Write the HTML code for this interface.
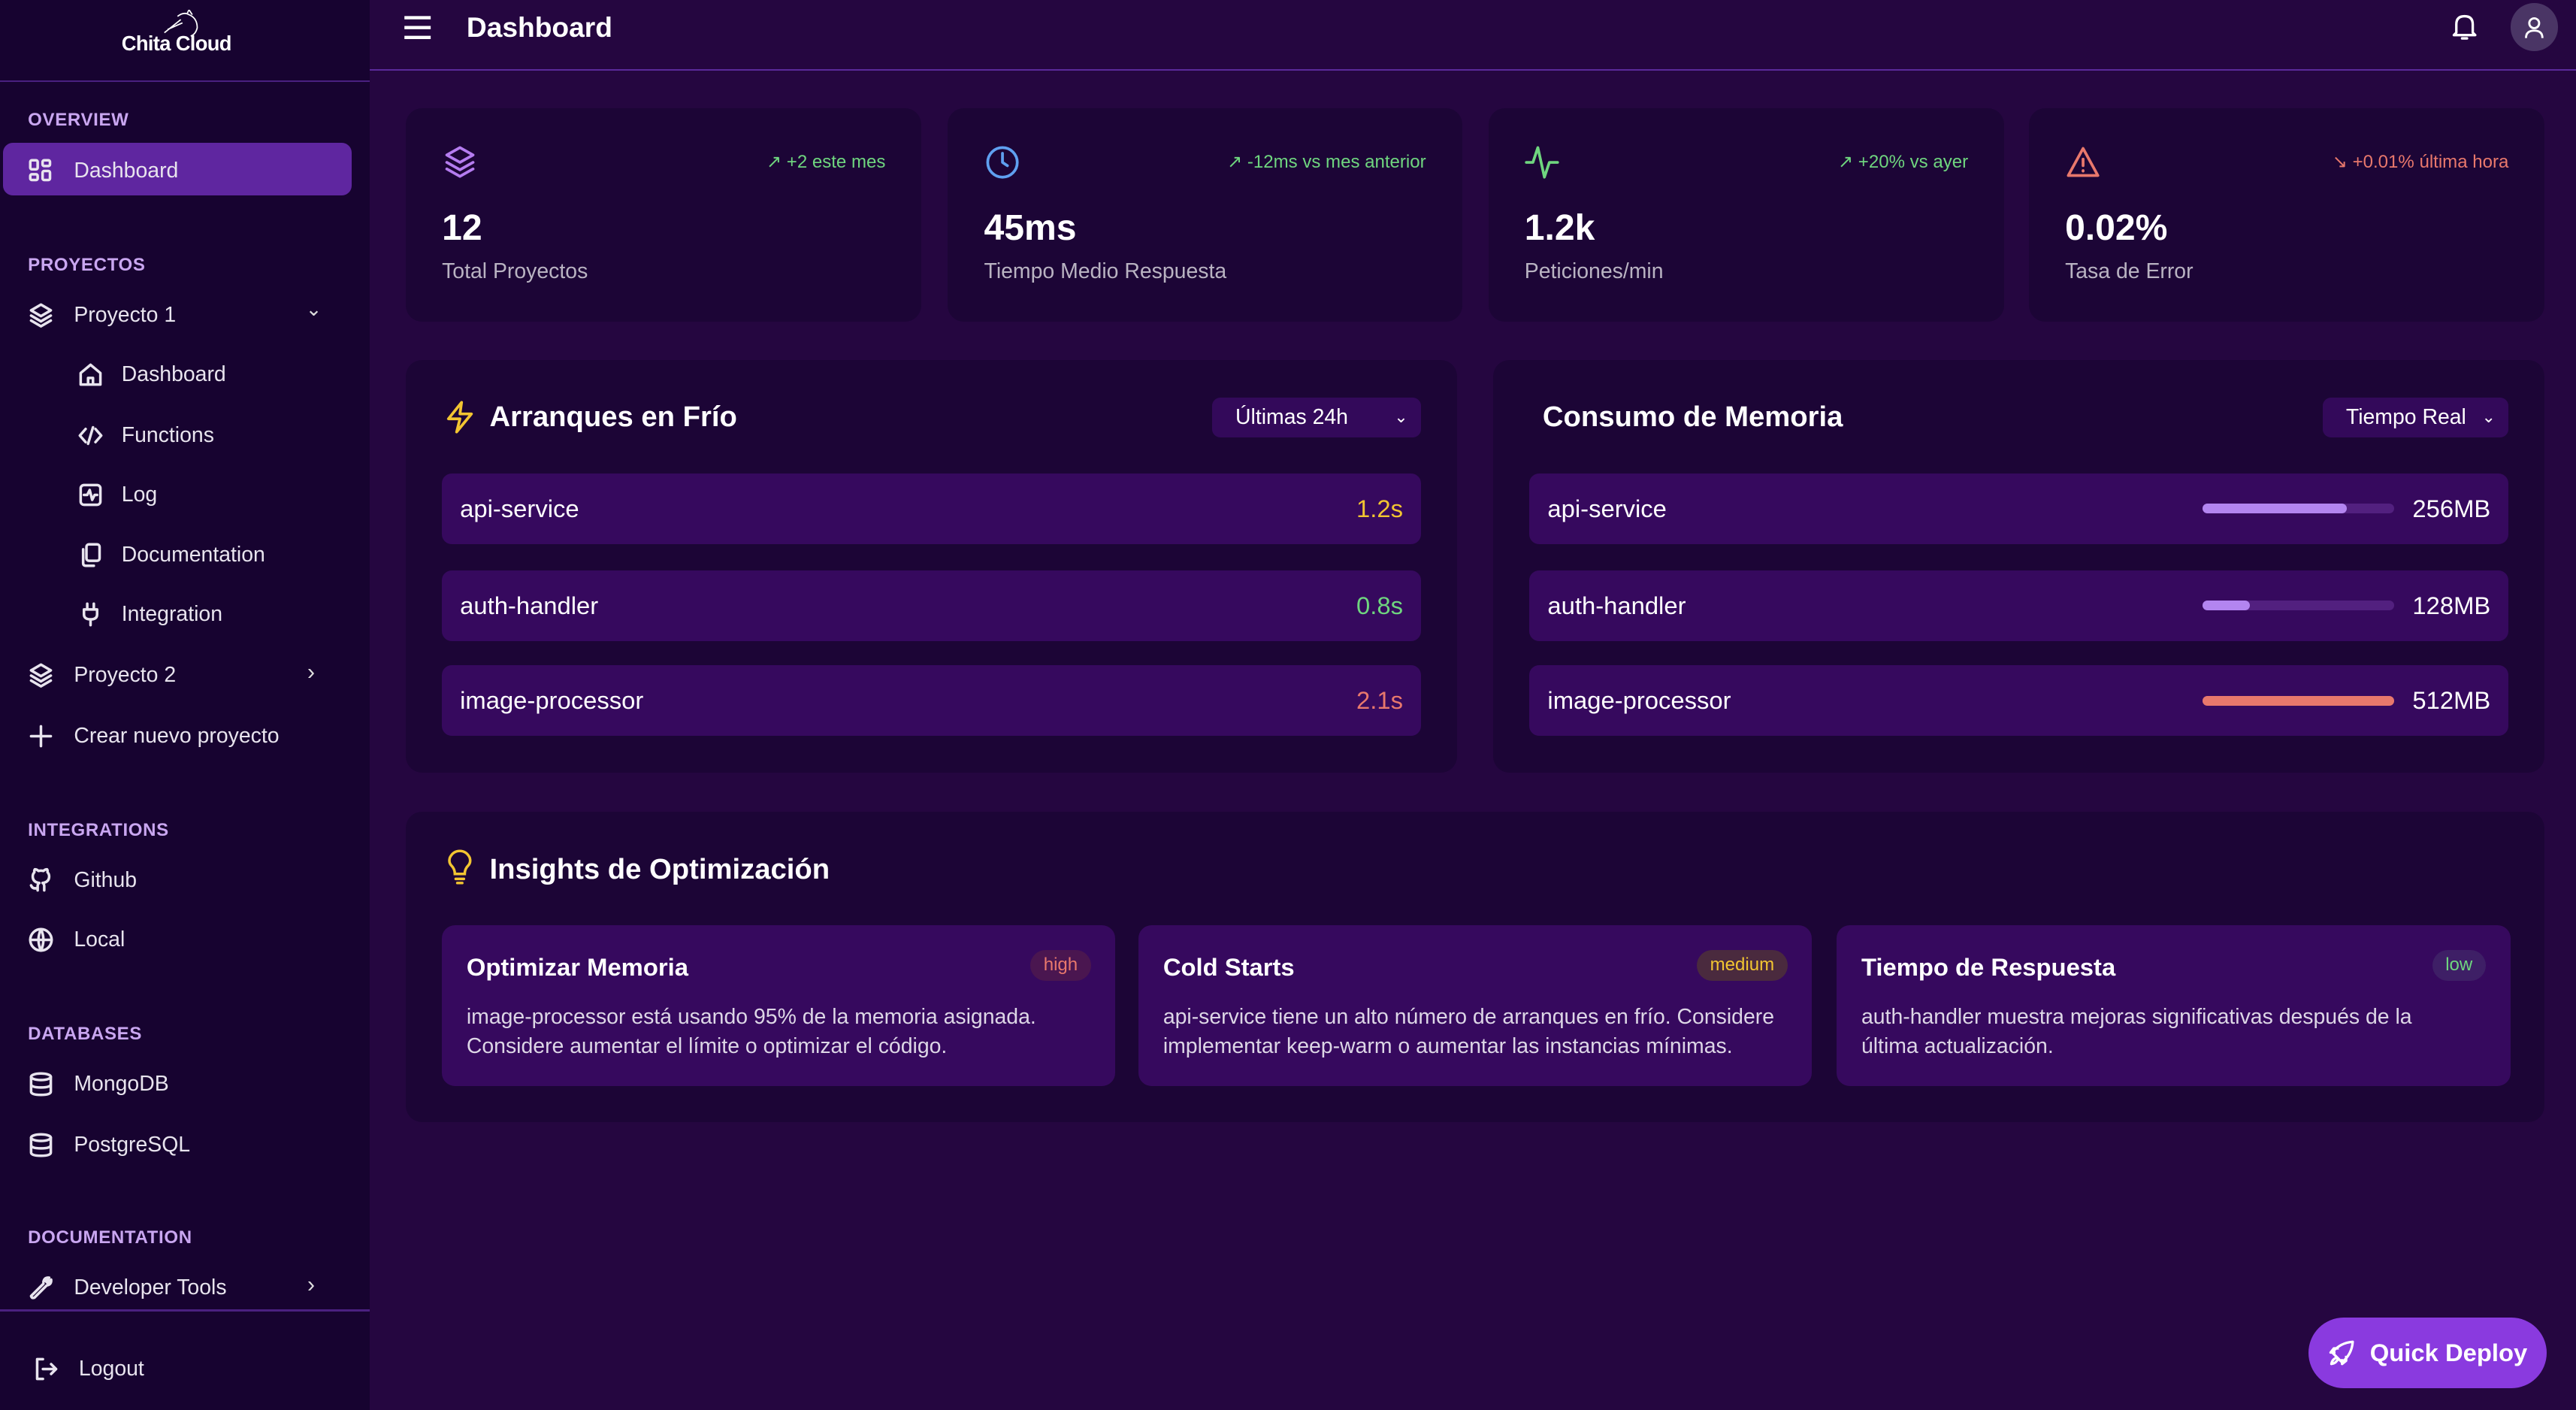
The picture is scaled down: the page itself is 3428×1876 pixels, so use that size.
<!DOCTYPE html>
<html><head><meta charset="utf-8"><style>
html,body{margin:0;padding:0;background:#250640;overflow:hidden}
#root{width:1568px;height:858px;position:relative;zoom:2.18622;font-family:"Liberation Sans",sans-serif;color:#fff;background:#250640}
.abs{position:absolute}
.sb{left:0;top:0;width:225px;height:858px;background:#170330}
.sec{position:absolute;left:17px;font-size:11px;font-weight:bold;color:#c9a6f0;letter-spacing:.3px;margin-top:1px}
.it{position:absolute;left:17px;font-size:13px;color:#e8e4ee;display:flex;align-items:center;gap:12px;margin-top:1px}
.it svg,.sub svg{width:16px;height:16px;fill:none;stroke:#e8e4ee;stroke-width:1.6;stroke-linecap:round;stroke-linejoin:round}
.sub{position:absolute;left:47px;font-size:13px;color:#e8e4ee;display:flex;align-items:center;gap:11px;margin-top:1px}
.card{position:absolute;background:#1c0536;border-radius:10px}
.stat .val{position:absolute;left:22px;top:60px;font-size:22px;font-weight:bold}
.stat .lbl{position:absolute;left:22px;top:92px;font-size:13px;color:#b9b3c2}
.stat .tr{position:absolute;right:22px;top:26px;font-size:11px}
.stat svg{position:absolute;left:22px;top:22px;width:22px;height:22px;fill:none;stroke-width:1.7;stroke-linecap:round;stroke-linejoin:round}
.row{position:absolute;left:22px;right:22px;height:43px;background:#36095e;border-radius:6px;font-size:15px;display:flex;align-items:center;padding:0 11px;justify-content:space-between}
.ttl{position:absolute;font-size:17.5px;font-weight:bold}
.dd{position:absolute;background:#33095a;border-radius:5px;font-size:13px;height:24px;display:flex;align-items:center;padding:0 8px 0 14px;box-sizing:border-box;justify-content:space-between}
.bar{width:117px;height:6px;border-radius:3px;background:#52207f;position:relative;margin-left:auto;margin-right:11px}
.bar i{position:absolute;left:0;top:0;height:6px;border-radius:3px}
.ins{position:absolute;top:69px;width:410px;height:98px;background:#36095e;border-radius:8px}
.ins b{position:absolute;left:15px;top:17px;font-size:15px}
.ins p{position:absolute;left:15px;top:47px;margin:0;font-size:13px;line-height:18px;color:#ddd6e6;width:375px}
.tag{position:absolute;right:15px;top:15px;font-size:11px;padding:3px 8px;border-radius:10px}
</style></head><body><div id="root">
<div class="abs sb"></div>
<div class="abs" style="left:0;top:49px;width:225px;height:1px;background:#4a2080"></div>
<svg class="abs" style="left:96px;top:6px" width="30" height="18" viewBox="0 0 30 18" fill="none" stroke="#fff" stroke-width="0.8"><path d="M4 14 L14 6 M6 12 L15 8 M12 4 Q16 1 19 3 Q24 5 24 11 Q23 15 20 16 M18 2 L19 0 L21 3"/></svg>
<div class="abs" style="left:74px;top:19px;font-size:12.5px;font-weight:bold;letter-spacing:-.3px">Chita Cloud</div>
<div class="sec" style="top:66px">OVERVIEW</div>
<div class="abs" style="left:2px;top:87px;width:212px;height:32px;background:#5f26a0;border-radius:6px"></div>
<div class="it" style="top:95px"><svg viewBox="0 0 16 16"><rect x="1.5" y="1.5" width="4.5" height="5.5" rx="1"/><rect x="9" y="1.5" width="4.5" height="3.5" rx="1"/><rect x="1.5" y="10" width="4.5" height="3.5" rx="1"/><rect x="9" y="8" width="4.5" height="5.5" rx="1"/></svg><span>Dashboard</span></div>
<div class="sec" style="top:154px">PROYECTOS</div>
<div class="it" style="top:183px"><svg viewBox="0 0 16 16"><path d="M8 1.5 L14 5 L8 8.5 L2 5Z M2 8.2 L8 11.7 L14 8.2 M2 11.2 L8 14.7 L14 11.2"/></svg><span>Proyecto 1</span></div>
<div class="abs" style="left:186px;top:181px;font-size:12px;color:#ddd">&#8964;</div>
<div class="sub" style="top:219px"><svg viewBox="0 0 16 16"><path d="M2 7 L8 2 L14 7 V14 H2Z M6.5 14 V10 H9.5 V14"/></svg><span>Dashboard</span></div>
<div class="sub" style="top:256px"><svg viewBox="0 0 16 16"><path d="M5 4 L1.5 8 L5 12 M11 4 L14.5 8 L11 12 M9.5 3 L6.5 13"/></svg><span>Functions</span></div>
<div class="sub" style="top:292px"><svg viewBox="0 0 16 16"><rect x="2" y="2" width="12" height="12" rx="2"/><path d="M4 8 H6 L7.5 5 L9 11 L10.5 8 H12"/></svg><span>Log</span></div>
<div class="sub" style="top:329px"><svg viewBox="0 0 16 16"><rect x="5.5" y="1.5" width="8" height="10" rx="1.5"/><path d="M3.5 4.5 V13 Q3.5 14.5 5 14.5 H10"/></svg><span>Documentation</span></div>
<div class="sub" style="top:365px"><svg viewBox="0 0 16 16"><path d="M6 1.5 V5 M10 1.5 V5 M4 5 H12 V8 Q12 11 8 11 Q4 11 4 8Z M8 11 V14.5"/></svg><span>Integration</span></div>
<div class="it" style="top:402px"><svg viewBox="0 0 16 16"><path d="M8 1.5 L14 5 L8 8.5 L2 5Z M2 8.2 L8 11.7 L14 8.2 M2 11.2 L8 14.7 L14 11.2"/></svg><span>Proyecto 2</span></div>
<div class="abs" style="left:187px;top:401px;font-size:14px;color:#ddd">&#8250;</div>
<div class="it" style="top:439px"><svg viewBox="0 0 16 16"><path d="M8 2 V14 M2 8 H14"/></svg><span>Crear nuevo proyecto</span></div>
<div class="sec" style="top:498px">INTEGRATIONS</div>
<div class="it" style="top:527px"><svg viewBox="0 0 16 16"><path d="M6 14 V11.5 Q6 10 7 9.5 Q3 9 3 5.5 Q3 4 4 3 Q3.8 1.8 4.3 1.2 Q5.5 1.2 6.5 2.2 Q8 1.8 9.5 2.2 Q10.5 1.2 11.7 1.2 Q12.2 1.8 12 3 Q13 4 13 5.5 Q13 9 9 9.5 Q10 10 10 11.5 V14 M6 12.5 Q3 13.5 2 11"/></svg><span>Github</span></div>
<div class="it" style="top:563px"><svg viewBox="0 0 16 16"><circle cx="8" cy="8" r="6.5"/><path d="M1.5 8 H14.5 M8 1.5 Q5 8 8 14.5 Q11 8 8 1.5"/></svg><span>Local</span></div>
<div class="sec" style="top:622px">DATABASES</div>
<div class="it" style="top:651px"><svg viewBox="0 0 16 16"><ellipse cx="8" cy="3.5" rx="6" ry="2"/><path d="M2 3.5 V12.5 Q2 14.5 8 14.5 Q14 14.5 14 12.5 V3.5 M2 8 Q2 10 8 10 Q14 10 14 8"/></svg><span>MongoDB</span></div>
<div class="it" style="top:688px"><svg viewBox="0 0 16 16"><ellipse cx="8" cy="3.5" rx="6" ry="2"/><path d="M2 3.5 V12.5 Q2 14.5 8 14.5 Q14 14.5 14 12.5 V3.5 M2 8 Q2 10 8 10 Q14 10 14 8"/></svg><span>PostgreSQL</span></div>
<div class="sec" style="top:746px">DOCUMENTATION</div>
<div class="it" style="top:775px"><svg viewBox="0 0 16 16"><path d="M9.5 4.5 Q10 1.5 13 1.8 L11 4 L12 5 L14.2 3 Q14.5 6 11.5 6.5 L4 14 Q2.5 14.5 2 13 L9.5 5.5"/></svg><span>Developer Tools</span></div>
<div class="abs" style="left:187px;top:774px;font-size:14px;color:#ddd">&#8250;</div>
<div class="abs" style="left:0;top:797px;width:225px;height:1px;background:#4a2080"></div>
<div class="it" style="top:824px;left:20px"><svg viewBox="0 0 16 16"><path d="M6 2 H2.5 V14 H6 M6 8 H14 M11 5 L14 8 L11 11"/></svg><span>Logout</span></div>

<div class="abs" style="left:225px;top:42px;width:1343px;height:1px;background:#5a2a9a"></div>
<svg class="abs" style="left:245px;top:8px" width="18" height="18" viewBox="0 0 18 18" stroke="#fff" stroke-width="2"><path d="M1 3 H17 M1 9 H17 M1 15 H17"/></svg>
<div class="abs" style="left:284px;top:7px;font-size:17px;font-weight:bold">Dashboard</div>
<svg class="abs" style="left:1491px;top:7px" width="18" height="18" viewBox="0 0 18 18" fill="none" stroke="#fff" stroke-width="1.5" stroke-linecap="round" stroke-linejoin="round"><path d="M4 13 V8 Q4 3 9 3 Q14 3 14 8 V13 L15.5 14.5 H2.5Z M7.5 16.5 H10.5"/></svg>
<div class="abs" style="left:1528px;top:2px;width:29px;height:29px;border-radius:50%;background:#4a3565"></div>
<svg class="abs" style="left:1535px;top:9px" width="15" height="15" viewBox="0 0 15 15" fill="none" stroke="#fff" stroke-width="1.3"><circle cx="7.5" cy="5" r="3"/><path d="M2.5 14 Q2.5 9.5 7.5 9.5 Q12.5 9.5 12.5 14"/></svg>

<div class="card stat" style="left:247px;top:66px;width:314px;height:130px"><svg viewBox="0 0 22 22" stroke="#b57cf0"><path d="M11 2 L19 6.5 L11 11 L3 6.5Z M3 11 L11 15.5 L19 11 M3 15 L11 19.5 L19 15"/></svg><div class="tr" style="color:#6fd67f">↗ +2 este mes</div><div class="val">12</div><div class="lbl">Total Proyectos</div></div>
<div class="card stat" style="left:577px;top:66px;width:313px;height:130px"><svg viewBox="0 0 22 22" stroke="#5fa0f0"><circle cx="11" cy="11" r="9"/><path d="M11 5.5 V11 L14 13"/></svg><div class="tr" style="color:#6fd67f">↗ -12ms vs mes anterior</div><div class="val">45ms</div><div class="lbl">Tiempo Medio Respuesta</div></div>
<div class="card stat" style="left:906px;top:66px;width:314px;height:130px"><svg viewBox="0 0 22 22" stroke="#6fd67f"><path d="M1 11 H5 L8 2 L12 20 L15 11 H20"/></svg><div class="tr" style="color:#6fd67f">↗ +20% vs ayer</div><div class="val">1.2k</div><div class="lbl">Peticiones/min</div></div>
<div class="card stat" style="left:1235px;top:66px;width:314px;height:130px"><svg viewBox="0 0 22 22" stroke="#e8786c"><path d="M11 2.5 L20 19 H2Z M11 9 V13 M11 16 V16.3"/></svg><div class="tr" style="color:#e8786c">↘ +0.01% última hora</div><div class="val">0.02%</div><div class="lbl">Tasa de Error</div></div>

<div class="card" style="left:247px;top:219px;width:640px;height:251px">
<svg class="abs" style="left:22px;top:24px" width="22" height="22" viewBox="0 0 22 22" fill="none" stroke="#f2c531" stroke-width="1.7" stroke-linejoin="round"><path d="M12 2 L4 12 H11 L9 20 L18 9 H11Z"/></svg>
<div class="ttl" style="left:51px;top:25px">Arranques en Frío</div>
<div class="dd" style="left:491px;top:23px;width:127px"><span>Últimas 24h</span><span style="font-size:10px">&#8964;</span></div>
<div class="row" style="top:69px"><span>api-service</span><span style="color:#f2c531">1.2s</span></div>
<div class="row" style="top:128px"><span>auth-handler</span><span style="color:#6fd67f">0.8s</span></div>
<div class="row" style="top:186px"><span>image-processor</span><span style="color:#e8786c">2.1s</span></div>
</div>
<div class="card" style="left:909px;top:219px;width:640px;height:251px">
<div class="ttl" style="left:30px;top:25px">Consumo de Memoria</div>
<div class="dd" style="left:505px;top:23px;width:113px"><span>Tiempo Real</span><span style="font-size:10px">&#8964;</span></div>
<div class="row" style="top:69px"><span>api-service</span><div class="bar"><i style="width:88px;background:#b385f0"></i></div><span>256MB</span></div>
<div class="row" style="top:128px"><span>auth-handler</span><div class="bar"><i style="width:29px;background:#b385f0"></i></div><span>128MB</span></div>
<div class="row" style="top:186px"><span>image-processor</span><div class="bar"><i style="width:117px;background:#e8786c"></i></div><span>512MB</span></div>
</div>

<div class="card" style="left:247px;top:494px;width:1302px;height:189px">
<svg class="abs" style="left:23px;top:23px" width="20" height="22" viewBox="0 0 20 22" fill="none" stroke="#f2c531" stroke-width="1.6" stroke-linecap="round"><path d="M7 15 Q7 12 5 10 Q3 8 4 5 Q6 1 10 1 Q14 1 16 5 Q17 8 15 10 Q13 12 13 15Z M7.5 18 H12.5 M8.5 20.5 H11.5"/></svg>
<div class="ttl" style="left:51px;top:25px">Insights de Optimización</div>
<div class="ins" style="left:22px"><b>Optimizar Memoria</b><span class="tag" style="background:#4a1650;color:#e8786c">high</span><p>image-processor está usando 95% de la memoria asignada. Considere aumentar el límite o optimizar el código.</p></div>
<div class="ins" style="left:446px"><b>Cold Starts</b><span class="tag" style="background:#4a2a3e;color:#f2c531">medium</span><p>api-service tiene un alto número de arranques en frío. Considere implementar keep-warm o aumentar las instancias mínimas.</p></div>
<div class="ins" style="left:871px"><b>Tiempo de Respuesta</b><span class="tag" style="background:#3e1f66;color:#6fd67f">low</span><p>auth-handler muestra mejoras significativas después de la<br>última actualización.</p></div>
</div>

<div class="abs" style="left:1405px;top:802px;width:145px;height:43px;border-radius:22px;background:#8a3adf;display:flex;align-items:center;justify-content:center;gap:9px;font-size:15px;font-weight:bold">
<svg width="17" height="17" viewBox="0 0 17 17" fill="none" stroke="#fff" stroke-width="1.5" stroke-linejoin="round"><path d="M6 11 L9 14 Q15 9 15.5 1.5 Q8 2 3 8Z M6 11 Q3 12 2.5 15 Q5.5 14.5 6.5 12 M5 8 H2 L4 5.5 H7 M9 12 V15 L11.5 13 V10"/></svg><span>Quick Deploy</span></div>
</div></body></html>
